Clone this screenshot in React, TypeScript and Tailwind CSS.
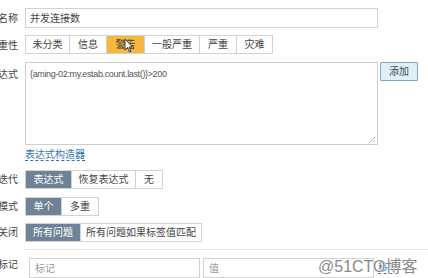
import type { ReactNode } from 'react';

const font = { fontFamily: '"Liberation Sans", Arial, "Noto Sans CJK SC", sans-serif' };

function Label({ text, top = false }: { text: string; top?: boolean }) {
  return (
    <div className={`w-[18px] shrink-0 flex justify-end overflow-hidden ${top ? 'pt-[5px] self-start' : ''}`}>
      <span className="shrink-0 whitespace-nowrap text-[10px] text-[#444]">{text}</span>
    </div>
  );
}

function Seg({ items, active, activeClass }: { items: [string, number][]; active: number; activeClass: string }) {
  return (
    <div className="flex">
      {items.map(([t, w], i) => (
        <div
          key={t}
          style={{ width: w }}
          className={`h-[19px] flex items-center justify-center whitespace-nowrap text-[10px] border-y border-r border-[#cfd3d6] ${i === 0 ? 'border-l' : ''} ${
            i === active ? activeClass : 'bg-white text-[#444]'
          }`}
        >
          {t}
        </div>
      ))}
    </div>
  );
}

function Row({ children, className = '' }: { children: ReactNode; className?: string }) {
  return <div className={`flex items-center gap-[7px] ${className}`}>{children}</div>;
}

export default function App() {
  return (
    <div style={font} className="relative w-[428px] h-[278px] overflow-hidden bg-white">
      <div className="pt-[8px] flex flex-col">
        <Row>
          <Label text="名称" />
          <div className="w-[353px] h-[20px] border border-[#d2d2d2] flex items-center px-[4px] text-[10px] text-[#444]">
            并发连接数
          </div>
        </Row>

        <Row className="mt-[7px]">
          <Label text="严重性" />
          <div className="h-[20px] flex">
            <Seg
              items={[
                ['未分类', 45],
                ['信息', 37],
                ['警告', 38],
                ['一般严重', 55],
                ['严重', 37],
                ['灾难', 36],
              ]}
              active={2}
              activeClass="bg-[#f7b73c] text-[#444]"
            />
          </div>
        </Row>

        <div className="flex gap-[7px] mt-[7px]">
          <Label text="表达式" top />
          <div className="relative w-[353px] h-[83px] border border-[#cfcfcf] px-[4px] pt-[5px] text-[9px] text-[#555] tracking-[-0.35px]">
            {'{aming-02:my.estab.count.last()}>200'}
            <svg className="absolute right-[1px] bottom-[1px]" width="7" height="7" viewBox="0 0 7 7">
              <path d="M6 1 L1 6 M6 4 L4 6" stroke="#999" strokeWidth="0.8" />
            </svg>
          </div>
          <div className="self-start ml-[-5px] w-[38px] h-[19px] border border-[#7aa6c2] bg-[#dff0fa] rounded-[1px] flex items-center justify-center text-[10px] text-[#444]">
            添加
          </div>
        </div>

        <div className="ml-[25px] mt-[4px] h-[12px] flex items-center">
          <span className="text-[10px] leading-none text-[#2f74b0] border-b border-dashed border-[#2f74b0]">表达式构造器</span>
        </div>

        <Row className="mt-[9px]">
          <Label text="事件迭代" />
          <Seg
            items={[
              ['表达式', 47],
              ['恢复表达式', 64],
              ['无', 27],
            ]}
            active={0}
            activeClass="bg-[#6e8496] text-white"
          />
        </Row>

        <Row className="mt-[8px]">
          <Label text="生成模式" />
          <Seg
            items={[
              ['单个', 37],
              ['多重', 37],
            ]}
            active={0}
            activeClass="bg-[#6e8496] text-white"
          />
        </Row>

        <Row className="mt-[7px]">
          <Label text="手动关闭" />
          <Seg
            items={[
              ['所有问题', 56],
              ['所有问题如果标签值匹配', 121],
            ]}
            active={0}
            activeClass="bg-[#6e8496] text-white"
          />
        </Row>

        <div className="ml-[25px] mt-[7px] border-t border-[#e6e6e6]" />

        <Row className="mt-[7px] items-start">
          <Label text="问题标记" />
          <div className="flex items-center gap-[3px] ml-[4px] mt-[1px]">
            <div className="w-[171px] h-[20px] border border-[#d2d2d2] flex items-center px-[5px] text-[10px] text-[#999]">标记</div>
            <div className="w-[171px] h-[20px] border border-[#d2d2d2] flex items-center px-[5px] text-[10px] text-[#999]">值</div>
            <span className="ml-[1px] text-[10px] text-[#2f74b0] border-b border-dashed border-[#2f74b0] leading-none">移除</span>
          </div>
        </Row>
      </div>

      {/* cursor over 警告 */}
      <svg className="absolute left-[124px] top-[38px]" width="10" height="16" viewBox="0 0 10 16">
        <path d="M1 1 L1 12 L3.5 9.5 L5.5 14 L7 13.3 L5 9 L8.5 9 Z" fill="#fff" stroke="#222" strokeWidth="0.9" strokeLinejoin="round" />
      </svg>

      {/* watermark */}
      <div
        className="absolute left-[318px] top-[255px] text-[16px] text-[#8a8a8a] whitespace-nowrap"
        style={{ ...font, textShadow: '0 0 2px #fff, 0 0 2px #fff, 0 0 1px #fff' }}
      >
        @51CTO博客
      </div>
    </div>
  );
}
